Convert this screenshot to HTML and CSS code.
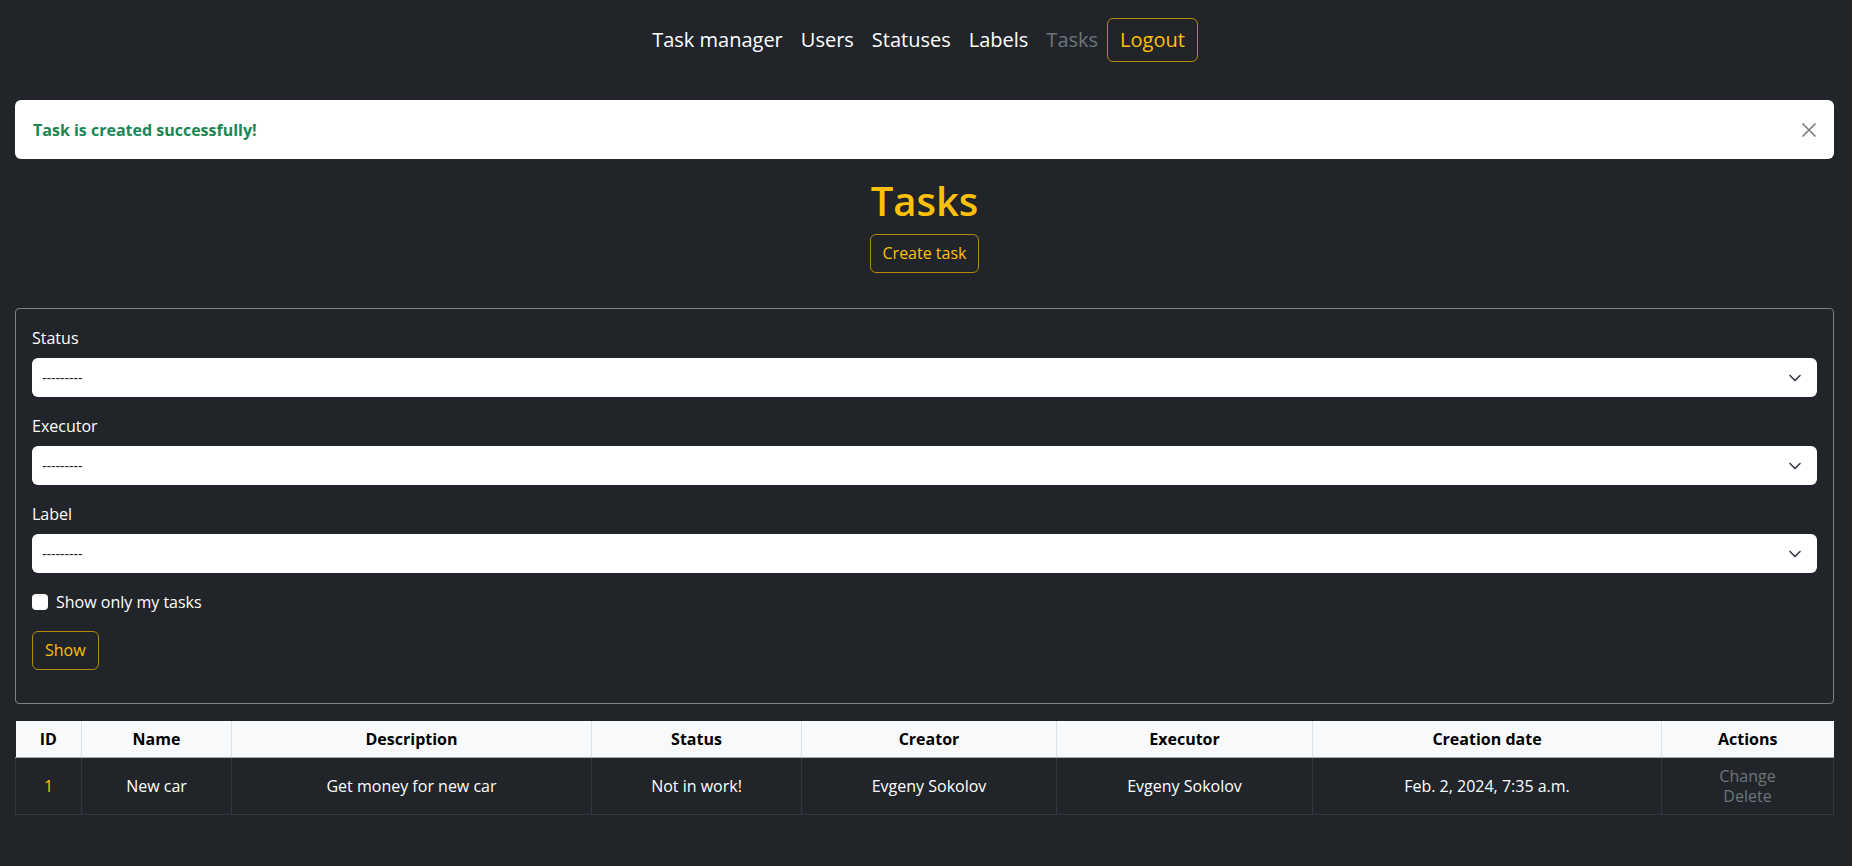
FILE: index.html
```html
<!DOCTYPE html>
<html lang="en">
<head>
<meta charset="utf-8">
<title>Tasks</title>
<link rel="stylesheet" href="styles.css">
</head>
<body>
<div class="page">
  <nav class="topnav">
    <a class="nav-link" href="#">Task manager</a>
    <a class="nav-link" href="#">Users</a>
    <a class="nav-link" href="#">Statuses</a>
    <a class="nav-link" href="#">Labels</a>
    <a class="nav-link muted" href="#">Tasks</a>
    <a class="btn-logout" href="#">Logout</a>
  </nav>

  <div class="alert">
    <span class="alert-text">Task is created successfully!</span>
    <button class="close" type="button" aria-label="Close">
      <svg width="16" height="16" viewBox="0 0 16 16"><path d="M1.5 1.5 L14.5 14.5 M14.5 1.5 L1.5 14.5" stroke="#7a7a7a" stroke-width="1.6" fill="none"/></svg>
    </button>
  </div>

  <div class="heading">
    <h1 class="title">Tasks</h1>
    <a class="btn-outline" href="#">Create task</a>
  </div>

  <form class="filter">
    <div class="group">
      <label class="label">Status</label>
      <div class="select"><span>---------</span><svg class="chev" width="12" height="8" viewBox="0 0 12 8"><path d="M1 1.5 L6 6.5 L11 1.5" stroke="#343a40" stroke-width="1.6" fill="none" stroke-linecap="round" stroke-linejoin="round"/></svg></div>
    </div>
    <div class="group">
      <label class="label">Executor</label>
      <div class="select"><span>---------</span><svg class="chev" width="12" height="8" viewBox="0 0 12 8"><path d="M1 1.5 L6 6.5 L11 1.5" stroke="#343a40" stroke-width="1.6" fill="none" stroke-linecap="round" stroke-linejoin="round"/></svg></div>
    </div>
    <div class="group">
      <label class="label">Label</label>
      <div class="select"><span>---------</span><svg class="chev" width="12" height="8" viewBox="0 0 12 8"><path d="M1 1.5 L6 6.5 L11 1.5" stroke="#343a40" stroke-width="1.6" fill="none" stroke-linecap="round" stroke-linejoin="round"/></svg></div>
    </div>
    <div class="check-row">
      <span class="checkbox"></span>
      <span class="check-label">Show only my tasks</span>
    </div>
    <a class="btn-outline btn-show" href="#">Show</a>
  </form>

  <table class="tasks">
    <thead>
      <tr>
        <th class="c-id">ID</th>
        <th class="c-name">Name</th>
        <th class="c-desc">Description</th>
        <th class="c-status">Status</th>
        <th class="c-creator">Creator</th>
        <th class="c-exec">Executor</th>
        <th class="c-date">Creation date</th>
        <th class="c-actions">Actions</th>
      </tr>
    </thead>
    <tbody>
      <tr>
        <td class="id">1</td>
        <td>New car</td>
        <td>Get money for new car</td>
        <td>Not in work!</td>
        <td>Evgeny Sokolov</td>
        <td>Evgeny Sokolov</td>
        <td>Feb. 2, 2024, 7:35 a.m.</td>
        <td class="actions"><a href="#">Change</a><a href="#">Delete</a></td>
      </tr>
    </tbody>
  </table>
</div>
</body>
</html>
```

FILE: styles.css
```css
* { box-sizing: border-box; }

html, body {
  margin: 0;
  background: #212529;
  color: #ffffff;
  font-family: "Open Sans", "Noto Sans", sans-serif;
  font-size: 16px;
}

a { text-decoration: none; }

.page {
  padding: 17px 18px 40px 15px;
}

.topnav {
  display: flex;
  justify-content: center;
  align-items: center;
  height: 45px;
  padding-right: 8px;
}

.nav-link {
  color: #ffffff;
  font-size: 20px;
  line-height: 30px;
  padding: 0 9px;
}

.nav-link.muted { color: #6c757d; }

.btn-logout {
  color: #ffc107;
  font-size: 20px;
  line-height: 30px;
  padding: 6px 12px;
  border: 1px solid #b58a0c;
  border-radius: 6px;
}

.alert {
  margin-top: 38px;
  height: 59px;
  background: #ffffff;
  border-radius: 6px;
  display: flex;
  align-items: center;
  justify-content: space-between;
  padding: 0 17px 0 18px;
}

.alert-text {
  color: #1a8754;
  font-weight: 700;
  font-size: 16px;
}

.close {
  background: none;
  border: 0;
  padding: 0;
  width: 16px;
  height: 16px;
  display: flex;
}

.heading {
  display: flex;
  flex-direction: column;
  align-items: center;
  margin-top: 18px;
}

.title {
  margin: 0 0 9px;
  color: #ffc107;
  font-size: 40px;
  line-height: 48px;
  font-weight: 600;
}

.btn-outline {
  display: inline-block;
  color: #ffc107;
  font-size: 16px;
  line-height: 25px;
  padding: 6px 12px;
  border: 1px solid #b58a0c;
  border-radius: 6px;
}

.filter {
  margin-top: 35px;
  border: 1px solid #7d8185;
  border-radius: 4px;
  padding: 17px 16px 33px;
}

.group { margin-bottom: 17px; }

.label {
  display: block;
  font-size: 16px;
  line-height: 24px;
  margin-bottom: 8px;
}

.select {
  height: 39px;
  background: #ffffff;
  border-radius: 6px;
  color: #212529;
  display: flex;
  align-items: center;
  justify-content: space-between;
  padding: 0 16px 0 10px;
  font-size: 14px;
}

.check-row {
  display: flex;
  align-items: center;
  gap: 8px;
  height: 24px;
  margin-top: 15px;
}

.checkbox {
  width: 16px;
  height: 16px;
  background: #ffffff;
  border-radius: 4px;
}

.check-label { font-size: 16px; }

.btn-show {
  margin-top: 17px;
}

.tasks {
  margin-top: 17px;
  width: 100%;
  border-collapse: collapse;
  table-layout: fixed;
  text-align: center;
  font-size: 16px;
  line-height: 20px;
}

.tasks th {
  background: #f8f9fa;
  color: #000000;
  font-weight: 700;
  padding: 8px;
  border-left: 1px solid #dee2e6;
  border-bottom: 1px solid #a6a9ac;
}

.tasks th:first-child { border-left: 0; }

.tasks td {
  padding: 8px;
  border: 1px solid #32383e;
  color: #ffffff;
}

.c-id { width: 66px; }
.c-name { width: 150px; }
.c-desc { width: 360px; }
.c-status { width: 210px; }
.c-creator { width: 255px; }
.c-exec { width: 256px; }
.c-date { width: 349px; }

.tasks td.id { color: #ffc107; }

.actions a {
  display: block;
  color: #6c757d;
}
```
